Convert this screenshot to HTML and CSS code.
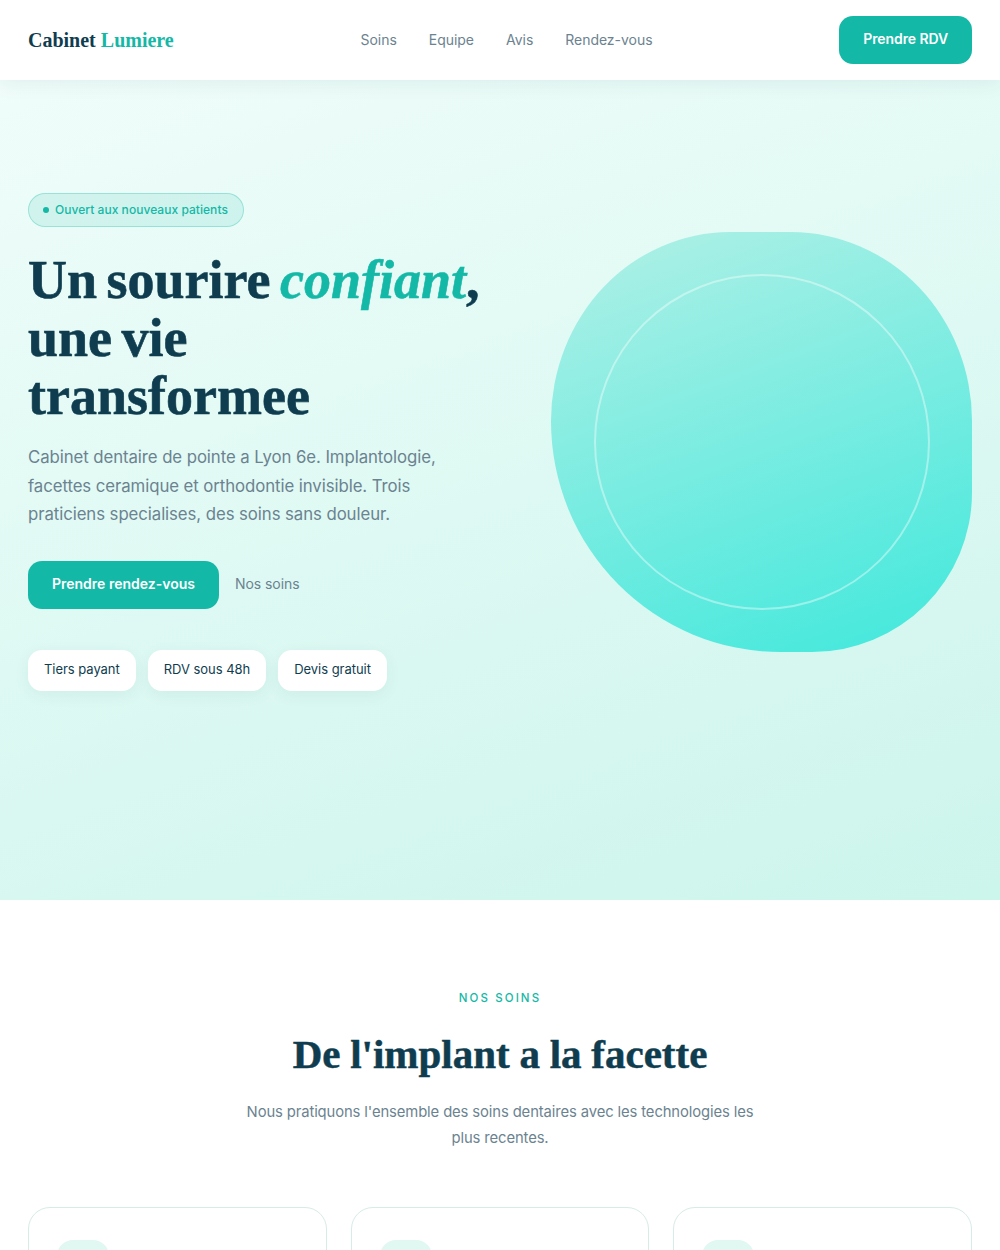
FILE: index.html
```html
<!DOCTYPE html>
<html lang="fr">
<head>
	<meta charset="UTF-8">
	<title>Cabinet Lumiere</title>
	<link rel="stylesheet" href="styles.css">
</head>
<body>
	<nav class="nav">
		<a class="logo">Cabinet <span>Lumiere</span></a>
		<ul class="links">
			<li>Soins</li>
			<li>Equipe</li>
			<li>Avis</li>
			<li>Rendez-vous</li>
		</ul>
		<a class="btn btn-nav">Prendre RDV</a>
	</nav>

	<section class="hero">
		<div class="hero-text">
			<p class="badge"><i class="dot"></i>Ouvert aux nouveaux patients</p>
			<h1>Un sourire <em>confiant</em>,<br>une vie<br>transformee</h1>
			<p class="lead">Cabinet dentaire de pointe a Lyon 6e. Implantologie, facettes ceramique et orthodontie invisible. Trois praticiens specialises, des soins sans douleur.</p>
			<div class="actions">
				<a class="btn">Prendre rendez-vous</a>
				<a class="ghost">Nos soins</a>
			</div>
			<ul class="chips">
				<li>Tiers payant</li>
				<li>RDV sous 48h</li>
				<li>Devis gratuit</li>
			</ul>
		</div>
		<div class="blob">
			<div class="ring"></div>
		</div>
	</section>

	<section class="services">
		<p class="eyebrow">NOS SOINS</p>
		<h2>De l'implant a la facette</h2>
		<p class="sub">Nous pratiquons l'ensemble des soins dentaires avec les technologies les plus recentes.</p>
		<div class="cards">
			<div class="card"><div class="tile"></div></div>
			<div class="card"><div class="tile"></div></div>
			<div class="card"><div class="tile"></div></div>
		</div>
	</section>
</body>
</html>
```

FILE: styles.css
```css
* {
	margin: 0;
	padding: 0;
	box-sizing: border-box;
}
li {
	list-style: none;
}
body {
	background: #fff;
	color: #0f3d4f;
	font-family: Inter, "Noto Sans", sans-serif;
}
.nav {
	position: relative;
	z-index: 2;
	display: flex;
	justify-content: space-between;
	align-items: center;
	height: 80px;
	padding: 0 28px;
	background: #fff;
	box-shadow: 0 2px 20px rgba(15,61,79,.08);
}
.logo {
	font-family: "Liberation Serif", serif;
	font-size: 20px;
	font-weight: 700;
}
.logo span {
	color: #14b8a6;
}
.links {
	display: flex;
	gap: 32px;
	padding-bottom: 2px;
	color: #6b8390;
	font-size: 14px;
	letter-spacing: -.03px;
}
.btn {
	display: block;
	padding: 15px 24px 17px;
	background: #14b8a6;
	border-radius: 14px;
	color: #fff;
	font-size: 14px;
	font-weight: 600;
	line-height: 16px;
}
.btn-nav {
	letter-spacing: -.1px;
}
.hero {
	display: grid;
	grid-template-columns: 1fr 421px;
	height: 820px;
	padding: 113px 28px 0;
	background: linear-gradient(160deg, #f0fdfa 0%, #ccf5ec 100%);
}
.badge {
	display: inline-flex;
	align-items: center;
	gap: 6px;
	height: 34px;
	padding: 0 15px 1px 14px;
	background: rgba(20,184,166,.12);
	border: 1px solid rgba(20,184,166,.3);
	border-radius: 17px;
	color: #14b8a6;
	font-size: 12px;
	font-weight: 500;
	letter-spacing: .04px;
}
.dot {
	width: 6px;
	height: 6px;
	background: #14b8a6;
	border-radius: 50%;
}
h1 {
	margin-top: 24px;
	font-family: "Liberation Serif", serif;
	font-size: 54px;
	font-weight: 700;
	line-height: 58px;
	word-spacing: -4px;
	-webkit-text-stroke: .6px currentColor;
}
h1 em {
	color: #14b8a6;
}
.lead {
	width: 420px;
	margin-top: 18px;
	color: #6b8390;
	font-size: 16.8px;
	letter-spacing: -.08px;
	line-height: 28.5px;
}
.actions {
	display: flex;
	align-items: center;
	gap: 16px;
	margin-top: 32px;
}
.ghost {
	padding-bottom: 2px;
	color: #6b8390;
	font-size: 14px;
	letter-spacing: -.05px;
}
.chips {
	display: flex;
	gap: 12px;
	margin-top: 41px;
}
.chips li {
	padding: 11px 16px 13px;
	background: #fff;
	border-radius: 14px;
	box-shadow: 0 4px 16px rgba(15,61,79,.06);
	font-size: 13px;
	letter-spacing: -.04px;
	line-height: 17px;
}
.blob {
	display: flex;
	justify-content: center;
	align-items: center;
	height: 420px;
	margin-top: 39px;
	background: linear-gradient(160deg, #b2f0e6 0%, #40e8dc 100%);
	border-radius: 42.5% 43% 38% 54.5% / 45% 45% 38% 55%;
}
.ring {
	width: 336px;
	height: 336px;
	border: 2px solid rgba(255,255,255,.4);
	border-radius: 50%;
}
.services {
	height: 350px;
	overflow: hidden;
	padding: 90px 28px 0;
	text-align: center;
}
.eyebrow {
	color: #14b8a6;
	font-size: 11.5px;
	font-weight: 500;
	letter-spacing: 2.1px;
	line-height: 16px;
}
h2 {
	margin-top: 24px;
	font-family: "Liberation Serif", serif;
	font-size: 41px;
	font-weight: 700;
	line-height: 48px;
	word-spacing: -.5px;
	-webkit-text-stroke: .5px currentColor;
}
.sub {
	width: 520px;
	margin: 21px auto 0;
	color: #6b8390;
	font-size: 14.8px;
	letter-spacing: -.11px;
	line-height: 26px;
}
.cards {
	display: grid;
	grid-template-columns: repeat(3, 1fr);
	gap: 24px;
	margin-top: 56px;
}
.card {
	height: 240px;
	padding: 32px 28px;
	border: 1px solid #d6ece8;
	border-radius: 22px;
}
.tile {
	width: 52px;
	height: 52px;
	background: #e0f7f2;
	border-radius: 16px;
}
```
